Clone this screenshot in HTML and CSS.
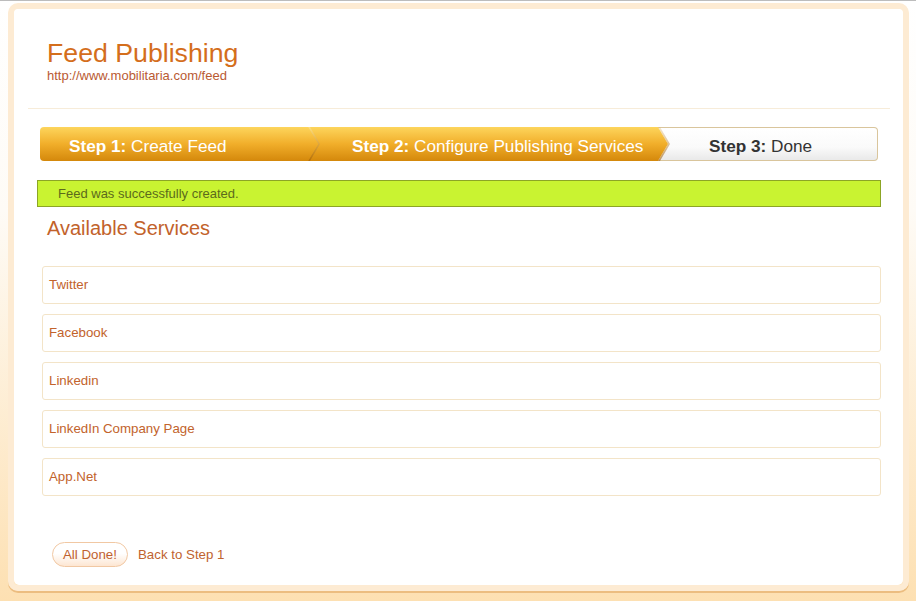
FILE: index.html
```html
<!DOCTYPE html>
<html>
<head>
  <meta charset="UTF-8">
  <title>Feed Publishing</title>
  <link rel="stylesheet" href="styles.css">
</head>
<body>
  <div class="frame">
    <div class="panel">
      <div class="head">
        <h1>Feed Publishing</h1>
        <div class="url">http://www.mobilitaria.com/feed</div>
      </div>
      <hr class="rule">
      <div class="content">
        <div class="steps">
          <div class="step step1"><b>Step 1:</b> Create Feed</div>
          <div class="step step2"><b>Step 2:</b> Configure Publishing Services</div>
          <div class="step step3"><b>Step 3:</b> Done</div>
        </div>
        <div class="notice">Feed was successfully created.</div>
        <h2>Available Services</h2>
        <ul class="services">
          <li>Twitter</li>
          <li>Facebook</li>
          <li>Linkedin</li>
          <li>LinkedIn Company Page</li>
          <li>App.Net</li>
        </ul>
        <div class="actions">
          <span class="btn">All Done!</span>
          <span class="back">Back to Step 1</span>
        </div>
      </div>
    </div>
  </div>
</body>
</html>
```

FILE: styles.css
```css
html, body {height: 100%}
body {margin: 0; font-family: "Liberation Sans", Arial, sans-serif; border-top: 1px solid #bcbcbc; box-sizing: border-box;
  background: linear-gradient(to bottom, #fff 0%, #fefbf6 35%, #fde0b2 100%);}

.frame {margin: 2px 7px 0 8px; border: 6px solid #fdebd3; border-radius: 10px; box-shadow: 0 2px 0 #ecbd80;}
.panel {background: #fff; border-radius: 5px; padding: 0 0 18px;}

.head {padding: 29px 0 0 33px;}
.head h1 {margin: 0; font-size: 26.7px; line-height: 30px; font-weight: normal; color: #d46e1c;}
.head .url {font-size: 13px; line-height: 15px; color: #b95a32;}

.rule {margin: 25px 13px 0 14px; border: 0; border-top: 1px solid #f7ecd9; height: 0;}

.content {padding: 0 22px 0 23px;}

.steps {display: flex; height: 34px; margin: 18px 3px 0;}
.step {position: relative; box-sizing: border-box; height: 34px; padding-top: 3px; line-height: 33px; font-size: 17.2px; white-space: nowrap; color: #fff;}
.step b {font-weight: bold;}
.step1, .step2 {background: linear-gradient(to bottom, #fdd55c 0%, #f1ae2a 50%, #d4880b 100%);
  clip-path: polygon(0 0, calc(100% - 10px) 0, 100% 50%, calc(100% - 10px) 100%, 0 100%);}
.step1 {width: 278px; padding-left: 29px; border-radius: 4px 0 0 4px; z-index: 3;}
.step2 {width: 360px; margin-left: -10px; padding-left: 44px; z-index: 2;}
.step3 {flex: 1; margin-left: -10px; padding-left: 51px; padding-top: 2px; color: #333; z-index: 1;
  background: linear-gradient(to bottom, #fff 0%, #fafafa 60%, #e9e9e9 100%);
  border: 1px solid #d9c59c; border-left: 0; border-radius: 0 4px 4px 0;}
.step2::before, .step3::before {content: ""; position: absolute; left: 0; top: 0; bottom: 0; width: 13px;
  background: linear-gradient(to bottom, rgba(255,240,190,.4), rgba(140,80,0,.45));
  clip-path: polygon(0 0, 2px 0, 12px 50%, 2px 100%, 0 100%, 10px 50%);}
.step3::before {top: -1px; bottom: -1px; background: linear-gradient(to bottom, rgba(230,180,90,.3), rgba(160,100,20,.6));}

.notice {margin-top: 19px; height: 27px; box-sizing: border-box; border: 1px solid #8ca525; background: #c9f331;
  padding: 5px 20px; font-size: 13px; line-height: 15px; color: #5c6a1c;}

.content h2 {margin: 10px 0 0 10px; font-size: 20px; line-height: 23px; font-weight: normal; color: #c2622b;}

.services {list-style: none; margin: 26px 0 0 5px; padding: 0; display: flex; flex-direction: column; gap: 10px;}
.services li {border: 1px solid #f3e4c8; border-radius: 3px; padding: 10px 6px 11px; font-size: 13.3px; line-height: 15px; color: #c2632c;}

.actions {display: flex; align-items: center; gap: 10px; margin: 46px 0 0 15px; font-size: 13.3px; line-height: 15px;}
.btn {border: 1px solid #f1c8a3; border-radius: 13px; padding: 4px 10px; background: linear-gradient(to bottom, #fff 0%, #fff 45%, #fde6d2 100%); color: #c0612f;}
.back {color: #c0632f;}
```
